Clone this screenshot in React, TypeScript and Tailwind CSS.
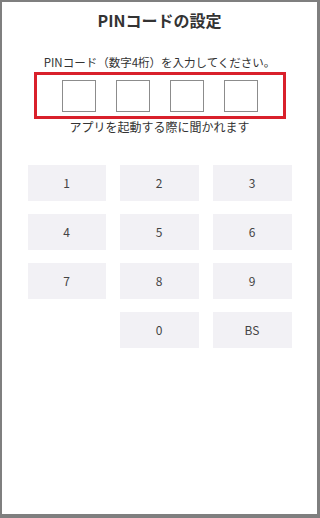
const keys = ['1', '2', '3', '4', '5', '6', '7', '8', '9', '', '0', 'BS'];

export default function App() {
  return (
    <div
      className="w-[320px] h-[518px] bg-white border-l-2 border-t-2 border-r-[3px] border-b-4 border-[#7f7f7f] flex flex-col items-center"
      style={{ fontFamily: '"Noto Sans CJK JP", "Noto Sans", sans-serif' }}
    >
      <h1 className="mt-[8px] text-[16px] leading-[20px] font-bold text-[#333]">PINコードの設定</h1>
      <p className="mt-[24px] text-[11.5px] leading-[16px] text-[#333]">PINコード（数字4桁）を入力してください。</p>

      <div className="mt-[2px] w-[252px] h-[47px] border-[3px] border-[#d9202b] flex items-center justify-center gap-[20px]">
        {[0, 1, 2, 3].map((i) => (
          <div key={i} className="w-[34px] h-[32px] border-[1.5px] border-[#8c8c8c]" />
        ))}
      </div>

      <p className="text-[12px] leading-[16px] text-[#333]">アプリを起動する際に聞かれます</p>

      <div className="mt-[30px] grid grid-cols-[78px_79px_79px] gap-x-[14px] gap-y-[13px]">
        {keys.map((k, i) =>
          k ? (
            <button key={i} className="h-[36px] bg-[#f2f1f5] text-[12px] text-[#444] flex items-center justify-center">
              {k}
            </button>
          ) : (
            <div key={i} />
          )
        )}
      </div>
    </div>
  );
}
